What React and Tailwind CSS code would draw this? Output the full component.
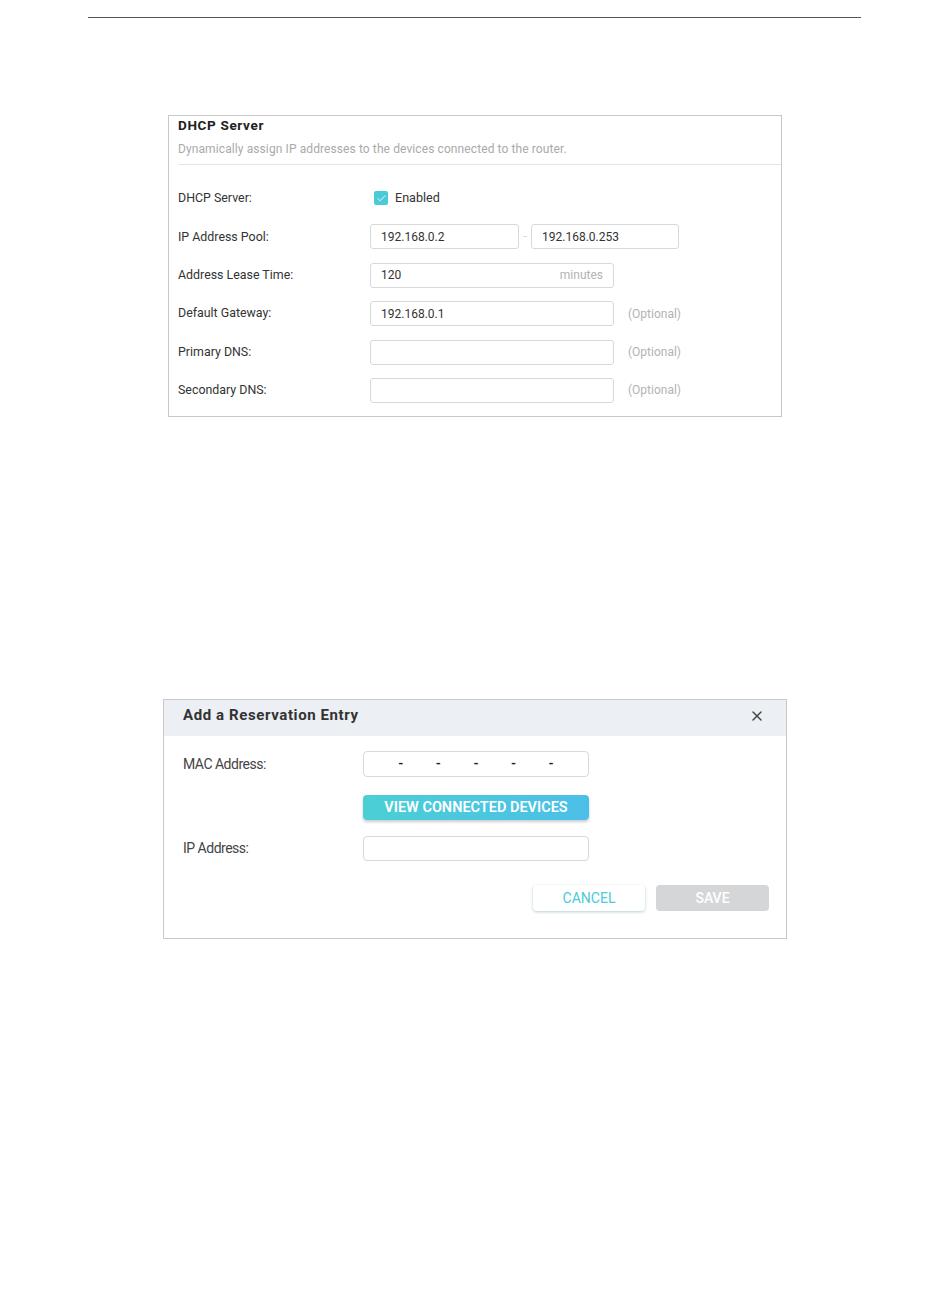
import { X, Check } from "lucide-react";

function Field({ className = "", children }) {
  return (
    <div className={`h-[25px] border border-[#d9d9d9] rounded-[3px] bg-white flex items-center px-[10px] text-[12px] text-[#333] ${className}`}>
      {children}
    </div>
  );
}

function Row({ label, children }) {
  return (
    <div className="flex items-center h-[25px]">
      <div className="w-[192px] text-[12.4px] text-[#333]">{label}</div>
      <div className="flex items-center">{children}</div>
    </div>
  );
}

function Optional() {
  return <span className="ml-[14px] text-[12px] text-[#b3b3b3]">(Optional)</span>;
}

export default function App() {
  return (
    <div className="w-[950px] h-[1297px] bg-white font-['Roboto',sans-serif] pt-[17px]">
      <div className="ml-[88px] w-[773px] h-[1px] bg-[#555]" />

      {/* DHCP server panel */}
      <div className="ml-[168px] mt-[97px] w-[614px] h-[302px] border border-[#c8c8c8] pl-[9px]">
        <div className="pt-[1px] text-[13.5px] font-bold text-[#222] leading-[17px] tracking-[0.65px]">DHCP Server</div>
        <div className="mt-[8px] text-[12px] text-[#aaa] tracking-[0.1px] leading-[15px]">
          Dynamically assign IP addresses to the devices connected to the router.
        </div>
        <div className="mt-[7px] h-[1px] bg-[#e6e6e6]" />

        <div className="mt-[21px] flex flex-col gap-[13.4px]">
          <Row label="DHCP Server:">
            <div className="ml-[4px] w-[14px] h-[14px] rounded-[2px] bg-[#4acbd6] flex items-center justify-center">
              <Check size={11} strokeWidth={1.8} className="text-white" />
            </div>
            <span className="ml-[7px] text-[12.6px] text-[#333]">Enabled</span>
          </Row>
          <Row label="IP Address Pool:">
            <Field className="w-[149px]">192.168.0.2</Field>
            <span className="w-[12px] text-center text-[11px] text-[#ccc]">-</span>
            <Field className="w-[148px]">192.168.0.253</Field>
          </Row>
          <Row label="Address Lease Time:">
            <Field className="w-[244px] justify-between">
              <span>120</span>
              <span className="text-[#b3b3b3]">minutes</span>
            </Field>
          </Row>
          <Row label="Default Gateway:">
            <Field className="w-[244px]">192.168.0.1</Field>
            <Optional />
          </Row>
          <Row label="Primary DNS:">
            <Field className="w-[244px]" />
            <Optional />
          </Row>
          <Row label="Secondary DNS:">
            <Field className="w-[244px]" />
            <Optional />
          </Row>
        </div>
      </div>

      {/* Reservation dialog */}
      <div className="ml-[163px] mt-[282px] w-[624px] h-[240px] border border-[#c8c8c8]">
        <div className="h-[36px] bg-[#eceff4] flex items-center justify-between pl-[19px] pr-[21px] pb-[5px]">
          <span className="text-[15px] font-bold text-[#333] tracking-[0.6px]">Add a Reservation Entry</span>
          <X size={16} strokeWidth={2.2} className="text-[#444]" />
        </div>

        <div className="pl-[19px] pt-[15px]">
          <div className="flex items-center h-[26px]">
            <div className="w-[180px] text-[14px] text-[#444] tracking-[-0.5px]">MAC Address:</div>
            <div className="w-[226px] h-[26px] border border-[#d9d9d9] rounded-[4px] flex items-center justify-around px-[18px] text-[13px] font-bold text-[#222]">
              <span>-</span><span>-</span><span>-</span><span>-</span><span>-</span>
            </div>
          </div>

          <div className="ml-[180px] mt-[18px] w-[226px] h-[25px] rounded-[4px] bg-gradient-to-r from-[#4bcfd5] to-[#4cbfe8] shadow-[0_2px_3px_rgba(0,0,0,0.2)] flex items-center justify-center text-[14.5px] font-semibold text-white tracking-[0px]">
            VIEW CONNECTED DEVICES
          </div>

          <div className="mt-[16px] flex items-center h-[25px]">
            <div className="w-[180px] text-[14px] text-[#444] tracking-[-0.5px]">IP Address:</div>
            <div className="w-[226px] h-[25px] border border-[#d9d9d9] rounded-[4px]" />
          </div>

          <div className="mt-[24px] flex justify-end pr-[17px] gap-[11px]">
            <div className="w-[112px] h-[26px] rounded-[4px] bg-white shadow-[0_1px_3px_rgba(40,120,130,0.35)] flex items-center justify-center text-[14px] text-[#4acbd6]">
              CANCEL
            </div>
            <div className="w-[113px] h-[26px] rounded-[4px] bg-[#d5d6d8] flex items-center justify-center text-[14px] font-medium text-white">
              SAVE
            </div>
          </div>
        </div>
      </div>
    </div>
  );
}
